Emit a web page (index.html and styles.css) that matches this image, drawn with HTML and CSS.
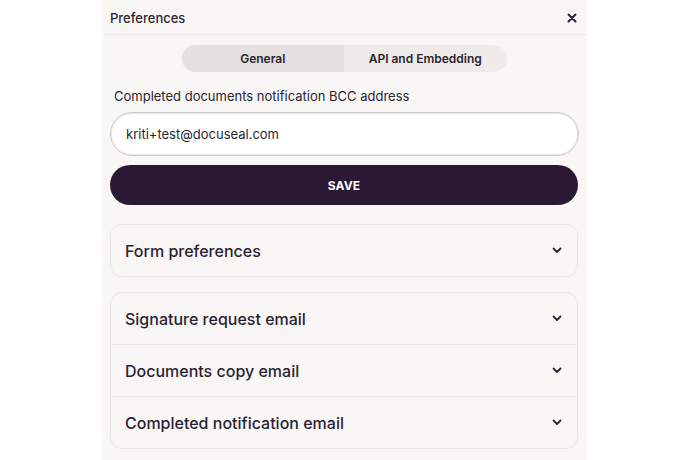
FILE: index.html
```html
<!DOCTYPE html>
<html>
<head>
<meta charset="utf-8">
<link rel="stylesheet" href="styles.css">
</head>
<body>
<div class="panel">
  <div class="header">
    <span class="title">Preferences</span>
    <span class="close">
      <svg width="10" height="10" viewBox="0 0 10 10"><path d="M1.5 1.5 L8.5 8.5 M8.5 1.5 L1.5 8.5" stroke="#2a1f33" stroke-width="2" stroke-linecap="round"/></svg>
    </span>
  </div>
  <div class="content">
    <div class="tabs-row">
      <div class="tabs">
        <div class="tab active">General</div>
        <div class="tab">API and Embedding</div>
      </div>
    </div>
    <label class="label">Completed documents notification BCC address</label>
    <div class="input">kriti+test@docuseal.com</div>
    <div class="btn">SAVE</div>
    <div class="card">
      <div class="row"><span>Form preferences</span><svg class="chev" width="10" height="7" viewBox="0 0 10 7"><path d="M1.5 1.5 L5 5 L8.5 1.5" fill="none" stroke="#2a1f33" stroke-width="1.8" stroke-linecap="round" stroke-linejoin="round"/></svg></div>
    </div>
    <div class="card">
      <div class="row"><span>Signature request email</span><svg class="chev" width="10" height="7" viewBox="0 0 10 7"><path d="M1.5 1.5 L5 5 L8.5 1.5" fill="none" stroke="#2a1f33" stroke-width="1.8" stroke-linecap="round" stroke-linejoin="round"/></svg></div>
      <div class="row"><span>Documents copy email</span><svg class="chev" width="10" height="7" viewBox="0 0 10 7"><path d="M1.5 1.5 L5 5 L8.5 1.5" fill="none" stroke="#2a1f33" stroke-width="1.8" stroke-linecap="round" stroke-linejoin="round"/></svg></div>
      <div class="row"><span>Completed notification email</span><svg class="chev" width="10" height="7" viewBox="0 0 10 7"><path d="M1.5 1.5 L5 5 L8.5 1.5" fill="none" stroke="#2a1f33" stroke-width="1.8" stroke-linecap="round" stroke-linejoin="round"/></svg></div>
    </div>
  </div>
</div>
</body>
</html>
```
FILE: styles.css
```css
html, body {
  margin: 0;
  padding: 0;
  background: #ffffff;
  height: 100%;
}
body {
  font-family: Inter, "Noto Sans", "Liberation Sans", sans-serif;
  color: #2a1f33;
}
.panel {
  width: 485px;
  margin-left: 102px;
  height: 460px;
  background: #f9f7f6;
  box-sizing: border-box;
  overflow: hidden;
}
.header {
  height: 35px;
  border-bottom: 1px solid #efebe9;
  display: flex;
  align-items: center;
  justify-content: space-between;
  padding: 0 10px 0 8px;
  box-sizing: border-box;
}
.title {
  font-size: 13px;
  font-weight: 500;
  color: #2a2530;
  padding-top: 1px;
}
.close {
  display: flex;
  width: 10px;
  height: 10px;
  margin-top: 1px;
}
.content {
  padding: 10px 9px 0 8px;
}
.tabs-row {
  display: flex;
  justify-content: center;
}
.tabs {
  display: flex;
  width: 325px;
  height: 27px;
  border-radius: 14px;
  background: #efebe8;
  overflow: hidden;
}
.tab {
  flex: 1;
  display: flex;
  align-items: center;
  justify-content: center;
  font-size: 12px;
  font-weight: 600;
  color: #2a2530;
}
.tab.active {
  background: #e4e0dd;
}
.label {
  display: block;
  font-size: 13px;
  color: #2a2530;
  margin-top: 16px;
  padding-left: 4px;
  line-height: 16px;
}
.input {
  margin-top: 8px;
  height: 44px;
  border-radius: 22px;
  background: #ffffff;
  border: 1px solid #cfcac7;
  box-shadow: inset 0 0 0 1px #ebe7e5;
  box-sizing: border-box;
  display: flex;
  align-items: center;
  padding-left: 15px;
  font-size: 13px;
  color: #2a1f33;
  margin-right: -1px;
}
.btn {
  margin-top: 9px;
  height: 40px;
  border-radius: 20px;
  background: #2b1834;
  color: #ffffff;
  display: flex;
  align-items: center;
  justify-content: center;
  font-size: 12px;
  font-weight: 700;
  letter-spacing: 0.2px;
}
.card {
  margin-top: 19px;
  border: 1px solid #ebe7e4;
  border-radius: 12px;
  background: #f9f7f6;
}
.card + .card {
  margin-top: 15px;
}
.row {
  height: 51px;
  display: flex;
  align-items: center;
  justify-content: space-between;
  padding: 0 15px 0 14px;
  font-size: 16px;
  font-weight: 500;
  color: #2a1f33;
}
.row + .row {
  border-top: 1px solid #ebe7e4;
}
.chev {
  display: block;
}
```
